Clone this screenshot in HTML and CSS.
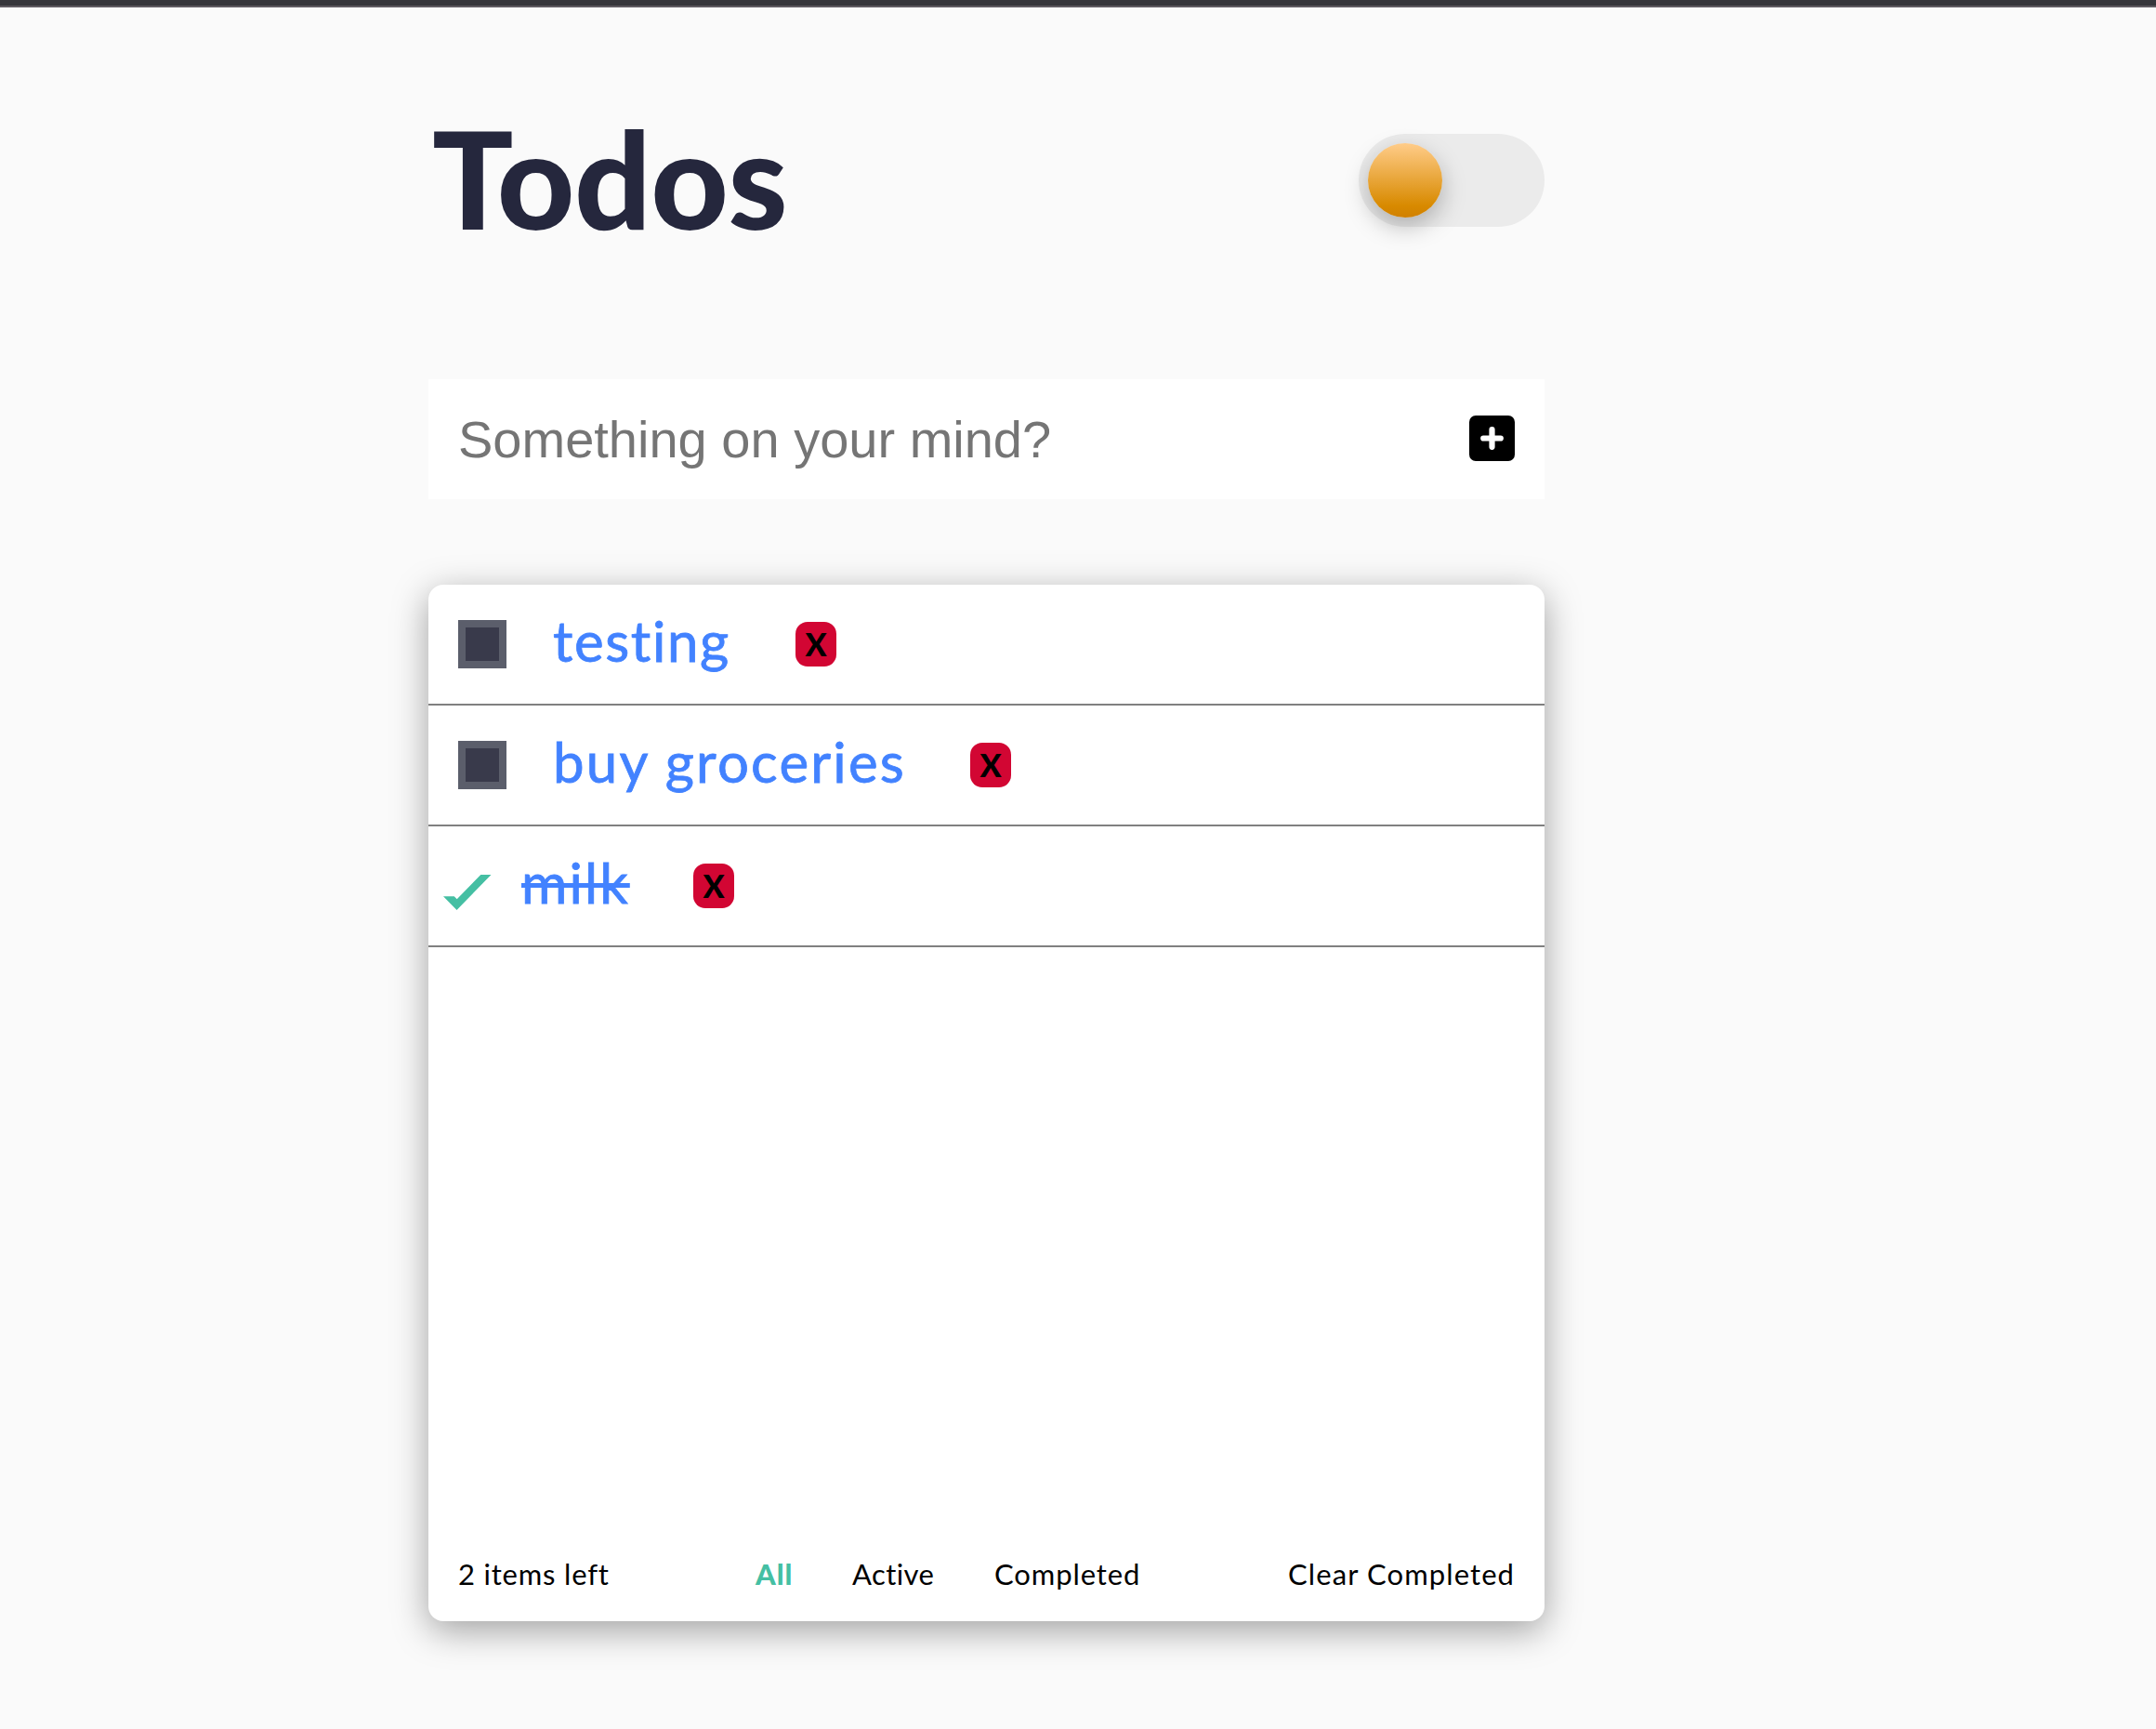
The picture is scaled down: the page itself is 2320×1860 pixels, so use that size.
FILE: index.html
```html
<!DOCTYPE html>
<html lang="en">
<head>
<meta charset="utf-8">
<title>Todos</title>
<link rel="stylesheet" href="styles.css">
</head>
<body>
<main class="app">
  <header class="header">
    <h1 class="title">Todos</h1>
    <div class="toggle"><div class="toggle-knob"></div></div>
  </header>
  <form class="new-todo">
    <span class="new-todo-hint">Something on your mind?</span>
    <svg class="add-icon" width="49" height="49" viewBox="0 0 49 49"><rect width="49" height="49" rx="7"/><path d="M24.5 15.2v18.6M15.2 24.5h18.6" stroke="#fff" stroke-width="6.2" stroke-linecap="round"/></svg>
  </form>
  <section class="card">
    <ul class="list">
      <li class="item"><span class="box"></span><span class="label label-testing">testing</span><button class="delete">X</button></li>
      <li class="item"><span class="box"></span><span class="label label-groceries">buy groceries</span><button class="delete">X</button></li>
      <li class="item item-done"><svg class="check" width="52" height="38" viewBox="0 0 52 38"><path d="M0 23.2h11.7l3 3L40.3 0H51.5L14.5 38z"/></svg><span class="label label-milk">milk</span><button class="delete">X</button></li>
    </ul>
    <footer class="footer">
      <span class="count">2 items left</span>
      <nav class="filters"><span class="filter-all">All</span><span class="filter-active">Active</span><span class="filter-completed">Completed</span></nav>
      <span class="clear">Clear Completed</span>
    </footer>
  </section>
</main>
</body>
</html>
```
FILE: styles.css
```css
* { box-sizing: border-box; margin: 0; padding: 0; }

body {
  min-height: 1860px;
  background: #fafafa;
  border-top: 6px solid #36363b;
  font-family: Lato, "Liberation Sans", sans-serif;
  font-variant-ligatures: none;
  color: #000;
}

body::before {
  content: "";
  display: block;
  height: 2px;
  background: #5f5a61;
}

.app { width: 1201px; margin-left: 461px; padding-top: 136px; }

.header {
  display: flex;
  justify-content: space-between;
  height: 264px;
}

.title {
  font-size: 145px;
  line-height: 95px;
  font-weight: 900;
  letter-spacing: -0.5px;
  color: #25273d;
  padding-left: 4px;
}

.toggle {
  width: 200px;
  height: 100px;
  padding: 10px;
  border-radius: 50px;
  background: #ebebeb;
}

.toggle-knob {
  width: 80px;
  height: 80px;
  border-radius: 50%;
  background: linear-gradient(180deg, #ffcc89, #d88a00 84%, #d08000);
  box-shadow: 0 10px 26px rgba(0, 0, 0, .26);
}

.new-todo {
  display: flex;
  align-items: center;
  justify-content: space-between;
  height: 129px;
  padding: 0 32px;
  background: #fff;
}

.new-todo-hint {
  font: 56px/64px "Liberation Sans", sans-serif;
  color: #757575;
}

.add-icon { margin-top: -3px; }

.card {
  display: flex;
  flex-direction: column;
  justify-content: space-between;
  height: 1115px;
  margin-top: 92px;
  border-radius: 16px;
  background: #fff;
  box-shadow: 0 10px 38px rgba(0, 0, 0, .36);
}

.list { list-style: none; }

.item {
  display: flex;
  align-items: center;
  height: 130px;
  padding-left: 32px;
  border-bottom: 2px solid #808080;
}

.item-done { padding-left: 16px; }

.box {
  width: 52px;
  height: 52px;
  margin-right: 48px;
  border: 8px solid #5b5e6b;
  background: #393a4b;
}

.check { margin: 13px 32px 0 0; fill: #45bfa3; }

.label {
  margin: 0 68px 8px 0;
  font-size: 60px;
  line-height: 80px;
  color: #4282ff;
  -webkit-text-stroke: .8px #4282ff;
  white-space: nowrap;
}

.label-testing { width: 195px; padding-left: 2px; letter-spacing: 1.6px; }
.label-groceries { width: 383px; padding-left: 2px; letter-spacing: 2.2px; }
.label-milk {
  width: 117px;
  letter-spacing: 2.1px;
  text-decoration: line-through;
  text-decoration-thickness: 5px;
}

.delete {
  width: 44px;
  height: 48px;
  border: 0;
  border-radius: 13px;
  background: #d20633;
  color: #000;
  font: 900 34px/48px Lato, sans-serif;
}

.footer {
  display: flex;
  justify-content: space-between;
  height: 100px;
  padding: 0 32px;
  font-size: 31px;
  line-height: 99px;
  white-space: nowrap;
}

.count { width: 163px; letter-spacing: .8px; }

.filters { display: flex; gap: 64px; }

.filter-all { width: 40px; font-weight: 900; letter-spacing: 1px; color: #45bfa3; }
.filter-active { width: 89px; letter-spacing: .4px; }
.filter-completed { width: 159px; letter-spacing: .9px; }

.clear { width: 244px; letter-spacing: 1.1px; }
```
